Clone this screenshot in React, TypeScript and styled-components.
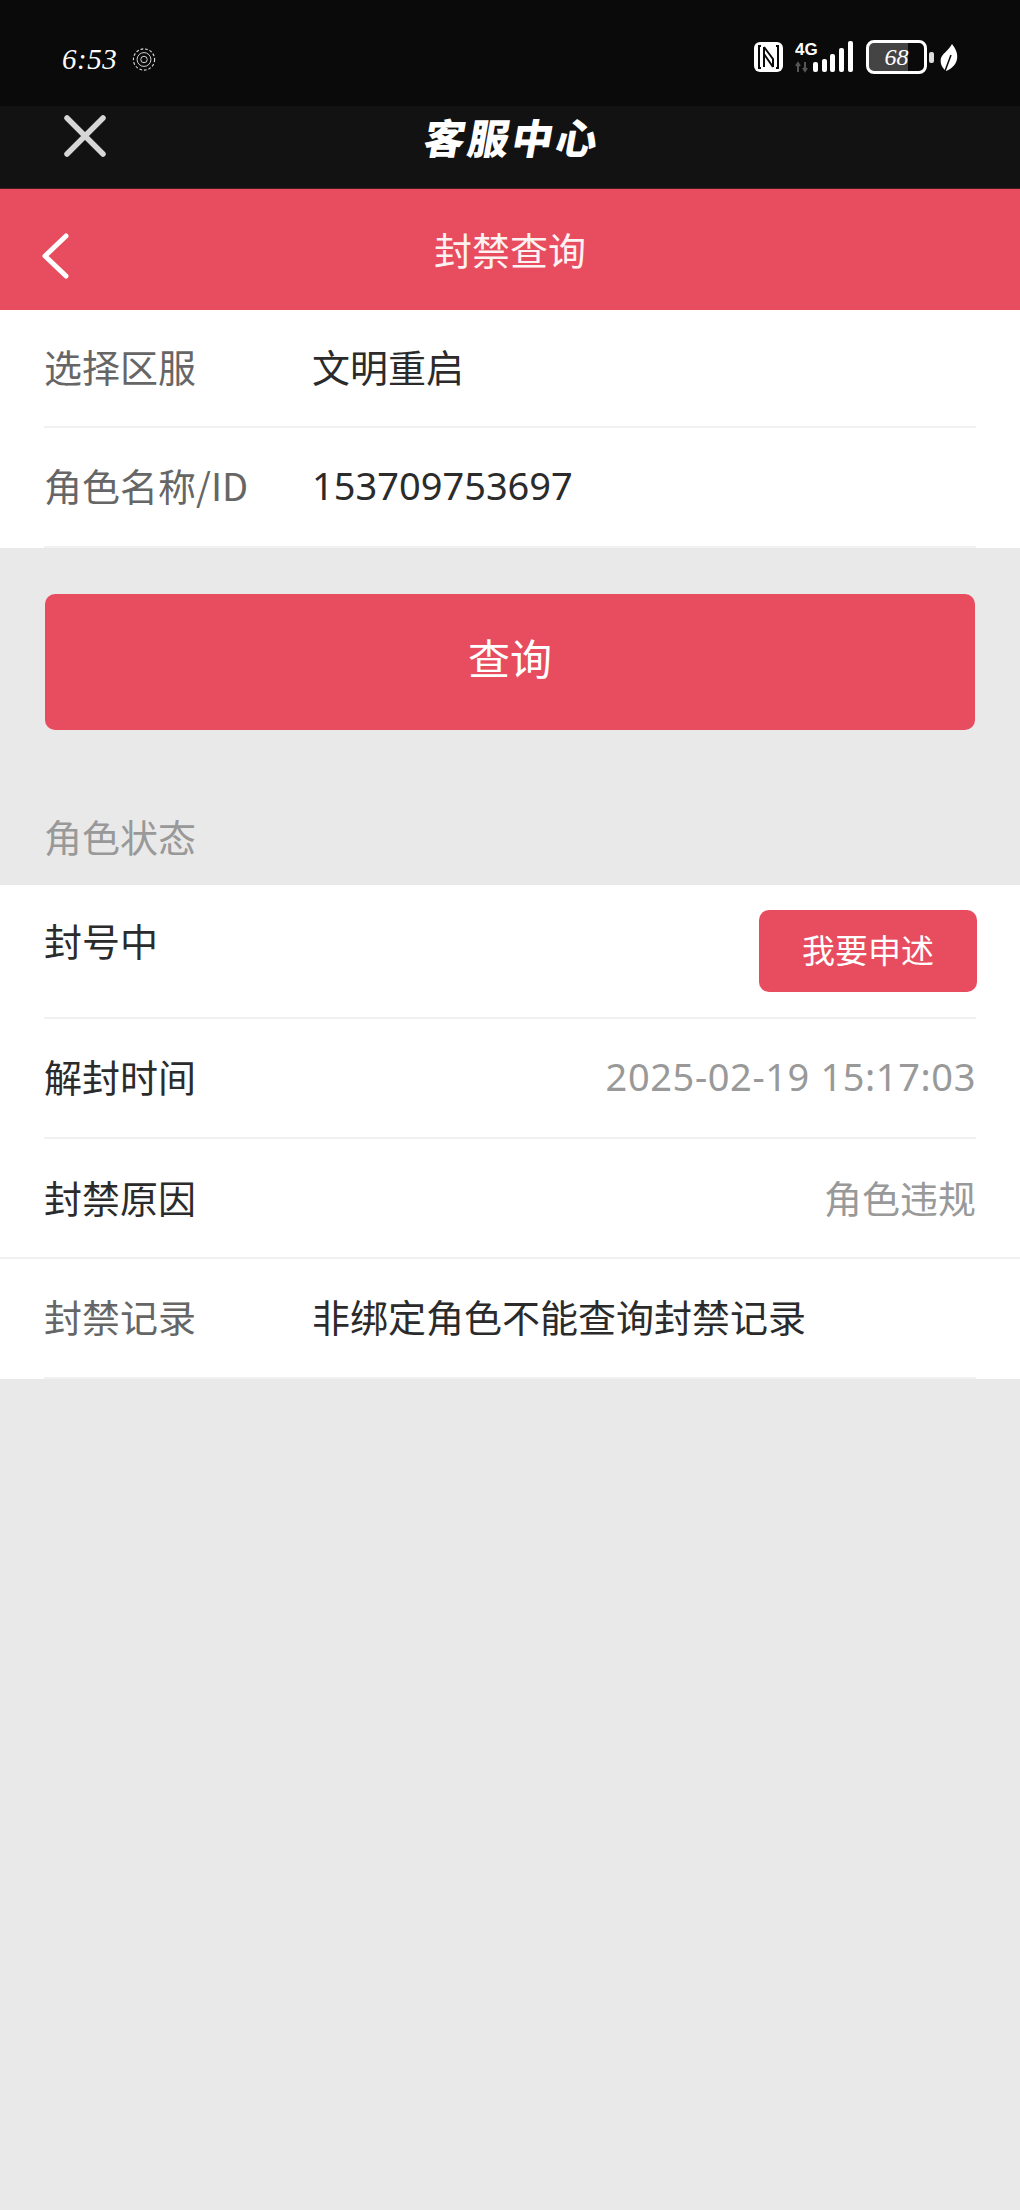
import styled, { createGlobalStyle } from 'styled-components'

const GlobalStyle = createGlobalStyle`
	html, body {
		margin: 0;
		padding: 0;
		background: #e9e9e9;
	}
	* {
		box-sizing: border-box;
	}
`

const red = '#e74d5e'

const Page = styled.div`
	width: 1020px;
	height: 2210px;
	background: #e9e9e9;
	overflow: hidden;
	font-family: 'Noto Sans CJK SC', 'Noto Sans', sans-serif;
	display: flex;
	flex-direction: column;
`

const StatusBar = styled.div`
	height: 106px;
	background: #0a0a0a;
	padding: 40px 62px 0 62px;
	display: flex;
	justify-content: space-between;
	align-items: flex-start;
`

const StatusLeft = styled.div`
	display: flex;
	align-items: center;
	gap: 15px;
`

const Clock = styled.span`
	color: #fff;
	font-family: 'Liberation Serif', serif;
	font-style: italic;
	font-size: 29px;
	line-height: 38px;
	letter-spacing: 0.5px;
`

const StatusRight = styled.div`
	display: flex;
	align-items: center;
	height: 34px;
`

const BatteryBody = styled.div`
	width: 61px;
	height: 34px;
	margin-left: 13px;
	border: 3px solid #fff;
	border-radius: 8px;
	overflow: hidden;
	background: linear-gradient(90deg, #444 0 70%, #0a0a0a 70% 100%);
	display: flex;
	align-items: center;
	justify-content: center;
`

const BatteryText = styled.span`
	color: #fff;
	font-family: 'Liberation Serif', serif;
	font-style: italic;
	font-size: 24px;
	line-height: 26px;
`

const BatteryCap = styled.div`
	width: 5px;
	height: 11px;
	margin: 0 6px 0 2px;
	background: #ddd;
	border-radius: 2px;
`

const TopNav = styled.div`
	position: relative;
	height: 83px;
	background: #121212;
	border-bottom: 1px solid #4a1a20;
	display: flex;
	align-items: flex-start;
	justify-content: center;
`

const CloseButton = styled.button`
	position: absolute;
	left: 63px;
	top: 8px;
	padding: 0;
	border: 0;
	background: none;
	display: flex;
`

const BrandTitle = styled.div`
	margin: 0 0 0 6px;
	color: #fff;
	font-family: 'Noto Sans CJK SC', sans-serif;
	font-weight: 900;
	font-size: 41px;
	line-height: 60px;
	letter-spacing: 3px;
	transform: skewX(-10deg);
`

const RedHeader = styled.div`
	position: relative;
	height: 121px;
	background: ${red};
	display: flex;
	align-items: center;
	justify-content: center;
`

const BackButton = styled.button`
	position: absolute;
	left: 40px;
	top: 44px;
	padding: 0;
	border: 0;
	background: none;
	display: flex;
`

const HeaderTitle = styled.div`
	color: #fdf2f2;
	font-size: 38px;
	line-height: 50px;
	margin-top: -1px;
`

const Card = styled.div`
	background: #fff;
`

const Row = styled.div<{ $h: number; $full?: boolean }>`
	height: ${({ $h }) => $h}px;
	margin: ${({ $full }) => ($full ? '0' : '0 44px')};
	padding: ${({ $full }) => ($full ? '0 44px 3px' : '0 0 4px')};
	display: flex;
	align-items: center;
	border-bottom: 2px solid #f1f1f1;
`

const Label = styled.div<{ $dark?: boolean }>`
	width: 268px;
	flex: none;
	font-size: 38px;
	line-height: 50px;
	color: ${({ $dark }) => ($dark ? '#2b2b2b' : '#666')};
`

const Value = styled.div`
	font-size: 38px;
	line-height: 50px;
	color: #2b2b2b;
`

const Digits = styled(Value)`
	font-family: 'Noto Sans', sans-serif;
`

const SideValue = styled.div`
	margin-left: auto;
	font-size: 38px;
	line-height: 50px;
	color: #999;
`

const SideDigits = styled(SideValue)`
	font-family: 'Noto Sans', sans-serif;
	letter-spacing: 0.6px;
`

const QueryButton = styled.button`
	display: block;
	width: 930px;
	height: 136px;
	margin: 46px 0 0 45px;
	padding: 0 0 12px;
	border: 0;
	border-radius: 10px;
	background: ${red};
	color: #fff;
	font-family: inherit;
	font-size: 42px;
`

const SectionTitle = styled.div`
	margin: 80px 0 0 44px;
	height: 75px;
	font-size: 38px;
	line-height: 52px;
	color: #999;
`

const BanState = styled.div`
	font-size: 38px;
	line-height: 50px;
	color: #2b2b2b;
	margin-top: -19px;
`

const AppealButton = styled.button`
	margin-left: auto;
	width: 218px;
	height: 82px;
	margin-top: 3px;
	margin-right: -1px;
	padding: 0 0 4px;
	border: 0;
	border-radius: 10px;
	background: ${red};
	color: #fff;
	font-family: inherit;
	font-size: 33px;
`

const NfcIcon = () => (
	<svg width="29" height="30" viewBox="0 0 29 30">
		<rect width="29" height="30" rx="6" fill="#fff" />
		<path d="M7 4H5v22h2M22 4h2v22h-2" stroke="#0a0a0a" strokeWidth="2" fill="none" />
		<path d="M10 5l9 12v8M10 12l9 13M10 5v20" stroke="#0a0a0a" strokeWidth="2" fill="none" />
	</svg>
)

const SignalIcon = () => (
	<svg width="58" height="32" viewBox="0 0 58 32" style={{ marginLeft: 12 }}>
		<text x="0" y="14" fill="#fff" fontSize="17" fontWeight="700" fontFamily="Liberation Sans, sans-serif">4G</text>
		<path d="M3 31v-9M1 25l2-3 2 3M10 21v9M8 27l2 3 2-3" stroke="#555" strokeWidth="2" fill="none" />
		<g fill="#fff">
			<rect x="18" y="21" width="5" height="10" rx="2" />
			<rect x="27" y="18" width="5" height="13" rx="2" />
			<rect x="35" y="13" width="5" height="18" rx="2" />
			<rect x="44" y="7" width="5" height="24" rx="2" />
			<rect x="53" y="0" width="5" height="31" rx="2" />
		</g>
	</svg>
)

const LeafIcon = () => (
	<svg width="18" height="27" viewBox="0 0 18 27">
		<path d="M12 0C16 5 18 10 17 15 16 21 11 25 6 27 1 23 0 18 1 14 3 9 9 6 12 0Z" fill="#fff" />
		<path d="M5 27L11 11" stroke="#0a0a0a" strokeWidth="1.5" />
	</svg>
)

const OrbitIcon = () => (
	<svg width="24" height="25" viewBox="0 0 26 26" fill="none" stroke="#ddd">
		<circle cx="13" cy="13" r="11.5" strokeWidth="1.2" strokeDasharray="3 2" />
		<circle cx="13" cy="13" r="7.5" strokeWidth="1" />
		<circle cx="13" cy="13" r="3.5" strokeWidth="1" />
	</svg>
)

const App = () => {
	return (
		<Page>
			<GlobalStyle />
			<StatusBar>
				<StatusLeft>
					<Clock>6:53</Clock>
					<OrbitIcon />
				</StatusLeft>
				<StatusRight>
					<NfcIcon />
					<SignalIcon />
					<BatteryBody>
						<BatteryText>68</BatteryText>
					</BatteryBody>
					<BatteryCap />
					<LeafIcon />
				</StatusRight>
			</StatusBar>
			<TopNav>
				<CloseButton>
					<svg width="44" height="44" viewBox="0 0 44 44">
						<path d="M4 4l36 36M40 4L4 40" stroke="#d6d6d6" strokeWidth="5.5" strokeLinecap="round" />
					</svg>
				</CloseButton>
				<BrandTitle>客服中心</BrandTitle>
			</TopNav>
			<RedHeader>
				<BackButton>
					<svg width="30" height="46" viewBox="0 0 30 46">
						<path d="M26 3L5 23l21 20" stroke="#fff" strokeWidth="5" strokeLinecap="round" strokeLinejoin="round" fill="none" />
					</svg>
				</BackButton>
				<HeaderTitle>封禁查询</HeaderTitle>
			</RedHeader>
			<Card>
				<Row $h={118}>
					<Label>选择区服</Label>
					<Value>文明重启</Value>
				</Row>
				<Row $h={120}>
					<Label>角色名称/ID</Label>
					<Digits>153709753697</Digits>
				</Row>
			</Card>
			<QueryButton>查询</QueryButton>
			<SectionTitle>角色状态</SectionTitle>
			<Card>
				<Row $h={134}>
					<BanState>封号中</BanState>
					<AppealButton>我要申述</AppealButton>
				</Row>
				<Row $h={120}>
					<Label $dark>解封时间</Label>
					<SideDigits>2025-02-19 15:17:03</SideDigits>
				</Row>
				<Row $h={120} $full>
					<Label $dark>封禁原因</Label>
					<SideValue>角色违规</SideValue>
				</Row>
				<Row $h={120}>
					<Label>封禁记录</Label>
					<Value>非绑定角色不能查询封禁记录</Value>
				</Row>
			</Card>
		</Page>
	)
}

export default App
